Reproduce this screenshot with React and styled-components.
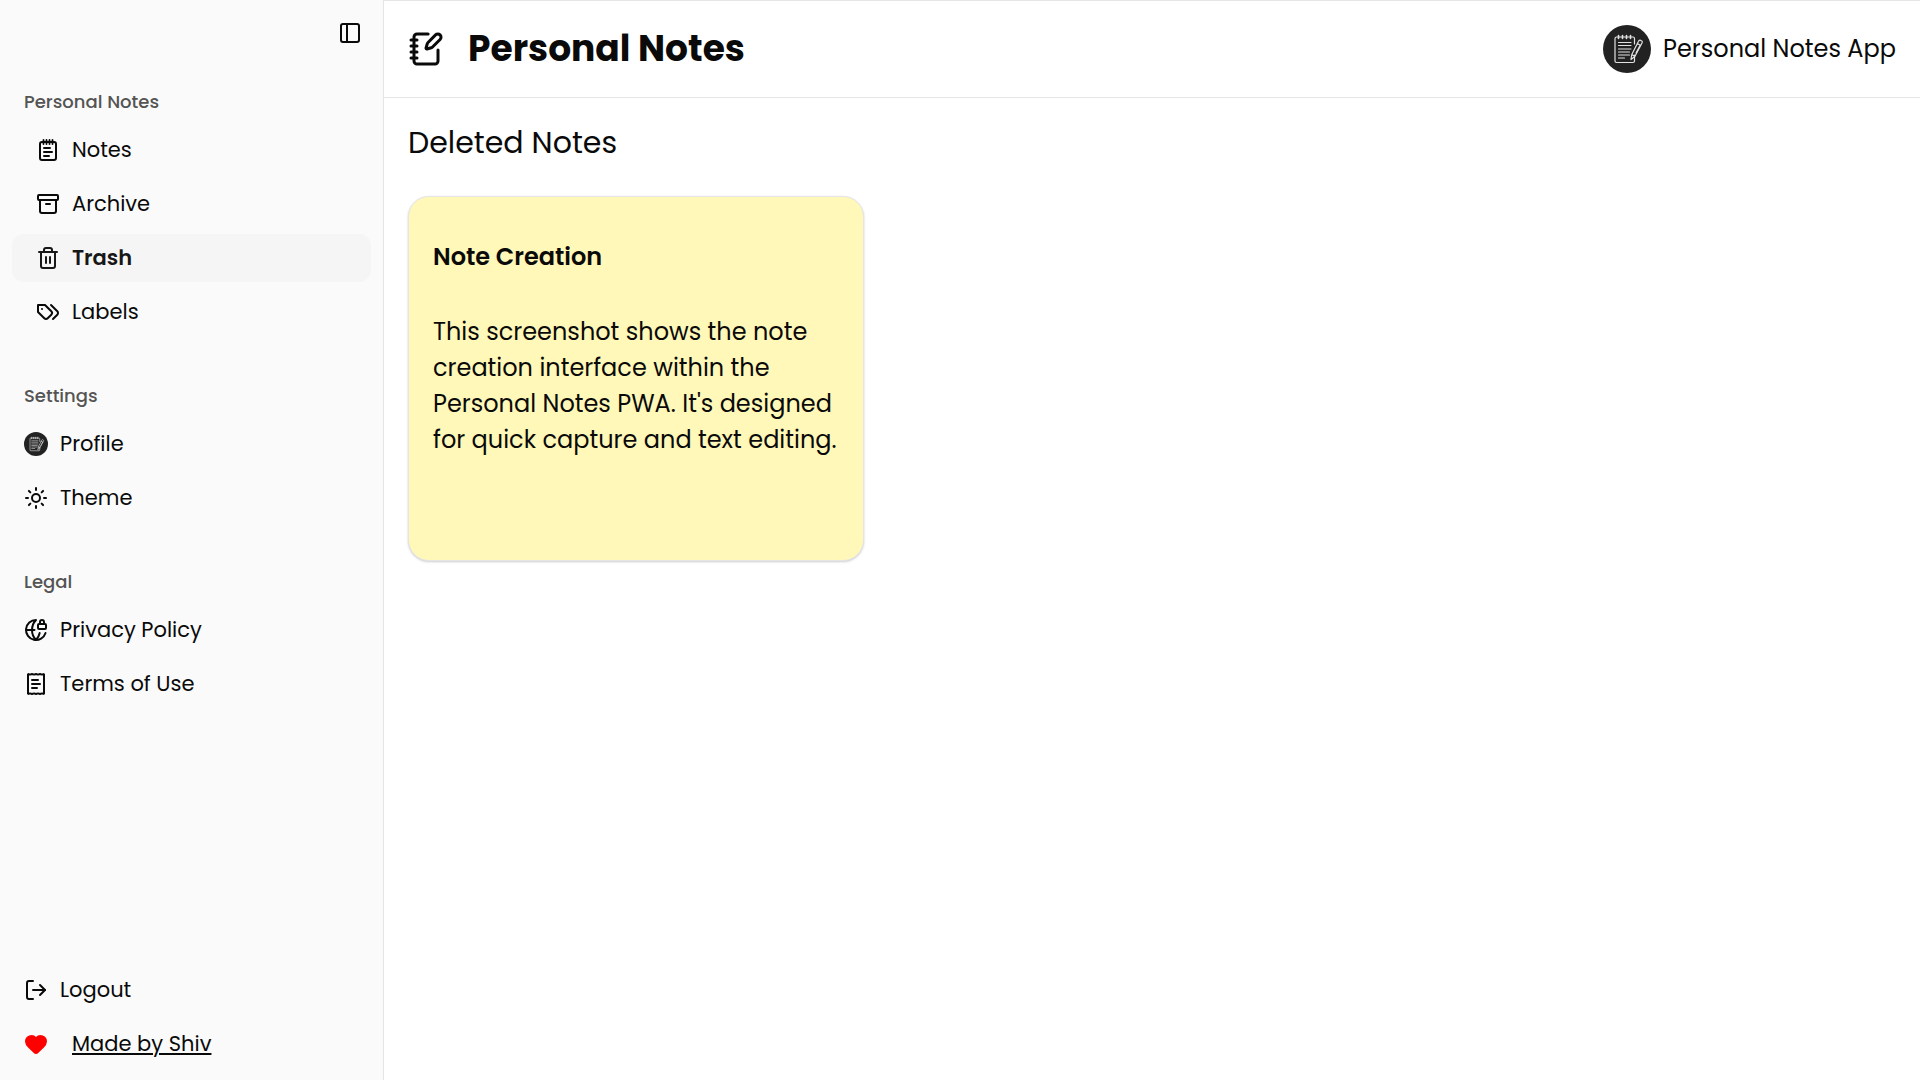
import React from "react";
import styled, { createGlobalStyle } from "styled-components";
import {
  Archive,
  GlobeLock,
  Heart,
  LogOut,
  NotebookPen,
  PanelLeft,
  Sun,
  Trash2,
} from "lucide-react";

const GlobalStyle = createGlobalStyle`
  *, *::before, *::after { box-sizing: border-box; }
  body {
    margin: 0;
    background: #ffffff;
    color: #0a0a0a;
    font-family: Poppins, Inter, "Open Sans", sans-serif;
    font-size: 24px;
    line-height: 36px;
  }
  h1, h2, h3, p, ul { margin: 0; padding: 0; }
  ul { list-style: none; }
  button { font: inherit; color: inherit; background: none; border: 0; padding: 0; cursor: pointer; }
  a { color: inherit; text-decoration: none; }
`;

const Shell = styled.div`
  display: flex;
  min-height: 100vh;
`;

const Sidebar = styled.aside`
  display: flex;
  flex-direction: column;
  flex: 0 0 384px;
  background: #fafafa;
  border-right: 1px solid #e5e5e5;
`;

const SidebarTop = styled.div`
  display: flex;
  justify-content: flex-end;
  padding: 12px;
`;

const ToggleButton = styled.button`
  display: grid;
  place-items: center;
  width: 42px;
  height: 42px;
  border-radius: 9px;
`;

const SidebarGroups = styled.nav`
  display: flex;
  flex: 1;
  flex-direction: column;
  gap: 12px;
`;

const Group = styled.section`
  padding: 12px;
`;

const GroupLabel = styled.h2`
  padding: 0 12px;
  color: #545454;
  font-size: 18px;
  font-weight: 500;
  line-height: 48px;
`;

const Menu = styled.ul`
  display: flex;
  flex-direction: column;
  gap: 6px;
`;

const MenuItem = styled.a`
  display: flex;
  align-items: center;
  gap: ${(p) => (p.$wide ? 24 : 12)}px;
  width: 100%;
  height: 48px;
  padding: 0 ${(p) => (p.$nested ? 24 : 12)}px;
  border-radius: 12px;
  background: ${(p) => (p.$active ? "#f5f5f5" : "transparent")};
  color: ${(p) => (p.$active ? "#171717" : "#0a0a0a")};
  font-size: 21px;
  font-weight: ${(p) => (p.$active ? 600 : 400)};
  text-align: left;

  svg { flex: none; }
`;

const Underlined = styled.span`
  text-decoration: underline;
`;

const SidebarFooter = styled.div`
  padding: 12px;
`;

const Main = styled.main`
  flex: 1;
  min-width: 0;
`;

const Header = styled.header`
  display: flex;
  align-items: center;
  justify-content: space-between;
  padding: 24px;
  border-top: 1px solid #e5e5e5;
  border-bottom: 1px solid #e5e5e5;
`;

const Brand = styled.div`
  display: flex;
  align-items: center;
  gap: 24px;
`;

const BrandTitle = styled.h1`
  font-size: 36px;
  font-weight: 700;
  line-height: 48px;
`;

const Account = styled.button`
  display: flex;
  align-items: center;
  gap: 12px;
`;

const Content = styled.div`
  display: flex;
  flex-direction: column;
  gap: 32px;
  padding: 24px;
`;

const PageTitle = styled.h2`
  font-size: 30px;
  font-weight: 400;
  line-height: 42px;
`;

const NoteGrid = styled.div`
  display: grid;
  grid-template-columns: repeat(auto-fill, 456px);
  gap: 24px;
`;

const NoteCard = styled.article`
  display: flex;
  flex-direction: column;
  gap: 39px;
  min-height: 365px;
  padding: 42px 24px;
  border: 1px solid #e5e5e5;
  border-radius: 21px;
  background: #fff8b8;
  box-shadow: 0 1px 3px rgba(0, 0, 0, 0.1), 0 1px 2px rgba(0, 0, 0, 0.1);
`;

const NoteTitle = styled.h3`
  font-size: 24px;
  font-weight: 600;
  line-height: 36px;
`;

const NoteText = styled.p`
  font-size: 24px;
  line-height: 36px;
`;

function Avatar({ size }) {
  return (
    <svg width={size} height={size} viewBox="0 0 48 48" fill="none" aria-hidden="true">
      <circle cx="24" cy="24" r="24" fill="#222222" />
      <g stroke="#e2e2e2" strokeLinecap="round" strokeLinejoin="round">
        <path d="M31.500 30v6a1.500 1.500 0 0 1-1.500 1.500H13.500a1.500 1.500 0 0 1-1.500-1.500V13.500a1.500 1.500 0 0 1 1.500-1.500H30a1.500 1.500 0 0 1 1.500 1.500V19" strokeWidth="1.200" />
        <path d="M15.500 10.500v3M19.500 10.500v3M23.500 10.500v3M27.500 10.500v3" strokeWidth="1.600" />
        <path d="M15.500 17.500h12.500M15.500 20.500h12.500M15.500 24h12.500M15.500 27h11M15.500 30h11M15.500 33h6" strokeWidth="1.100" />
        <path d="M28 34.500l.8-5 6.700-13.200c.4-1 1.300-1.300 2.200-.9l.7.4c.9.500 1.100 1.300.6 2.200l-7 13.200-4 3.300zM28.800 29.500l3.200 1.700M34.300 18.500l3.200 1.700M33 28l4-7.500" strokeWidth="1.200" />
      </g>
    </svg>
  );
}

function LineIcon({ children }) {
  return (
    <svg
      width="24"
      height="24"
      viewBox="0 0 24 24"
      fill="none"
      stroke="currentColor"
      strokeWidth="2"
      strokeLinecap="round"
      strokeLinejoin="round"
      aria-hidden="true"
    >
      {children}
    </svg>
  );
}

function NotesIcon() {
  return (
    <LineIcon>
      <rect x="4" y="4" width="16" height="18" rx="2" />
      <path d="M7.500 2v4M10.500 2v4M13.500 2v4M16.500 2v4" strokeWidth="1.800" />
      <path d="M8 10h6M8 14h8M8 18h5" />
    </LineIcon>
  );
}

function LabelsIcon() {
  return (
    <LineIcon>
      <path d="M9 5H2v7l6.290 6.290c.940.940 2.480.940 3.420 0l3.580-3.580c.940-.940.940-2.480 0-3.420L9 5Z" />
      <path d="M6 9.010V9" />
      <path d="m15 5 6.300 6.300a2.400 2.400 0 0 1 0 3.400L17 19" />
    </LineIcon>
  );
}

function TermsIcon() {
  return (
    <LineIcon>
      <path
        d="M4 2v20l2-.6 2 .6 2-.6 2 .6 2-.6 2 .6 2-.6 2 .6V2l-2 .6-2-.6-2 .6-2-.6-2 .6-2-.6-2 .6Z"
        strokeLinejoin="bevel"
      />
      <path d="M14 8H8M16 12H8M13 16H8" />
    </LineIcon>
  );
}

const noteLinks = [
  { label: "Notes", Icon: NotesIcon },
  { label: "Archive", Icon: Archive },
  { label: "Trash", Icon: Trash2, active: true },
  { label: "Labels", Icon: LabelsIcon },
];

export default function App() {
  return (
    <>
      <GlobalStyle />
      <Shell>
        <Sidebar>
          <SidebarTop>
            <ToggleButton type="button" aria-label="Toggle sidebar">
              <PanelLeft size={24} />
            </ToggleButton>
          </SidebarTop>
          <SidebarGroups>
            <Group>
              <GroupLabel>Personal Notes</GroupLabel>
              <Menu>
                {noteLinks.map(({ label, Icon, active }) => (
                  <li key={label}>
                    <MenuItem href="#" $nested $active={active} aria-current={active ? "page" : undefined}>
                      <Icon />
                      <span>{label}</span>
                    </MenuItem>
                  </li>
                ))}
              </Menu>
            </Group>
            <Group>
              <GroupLabel>Settings</GroupLabel>
              <Menu>
                <li>
                  <MenuItem as="button" type="button">
                    <Avatar size={24} />
                    <span>Profile</span>
                  </MenuItem>
                </li>
                <li>
                  <MenuItem as="button" type="button">
                    <Sun size={24} />
                    <span>Theme</span>
                  </MenuItem>
                </li>
              </Menu>
            </Group>
            <Group>
              <GroupLabel>Legal</GroupLabel>
              <Menu>
                <li>
                  <MenuItem href="#">
                    <GlobeLock size={24} />
                    <span>Privacy Policy</span>
                  </MenuItem>
                </li>
                <li>
                  <MenuItem href="#">
                    <TermsIcon />
                    <span>Terms of Use</span>
                  </MenuItem>
                </li>
              </Menu>
            </Group>
          </SidebarGroups>
          <SidebarFooter>
            <Menu>
              <li>
                <MenuItem as="button" type="button">
                  <LogOut size={24} />
                  <span>Logout</span>
                </MenuItem>
              </li>
              <li>
                <MenuItem href="#" $wide>
                  <Heart size={24} color="#ff0000" fill="#ff0000" />
                  <Underlined>Made by Shiv</Underlined>
                </MenuItem>
              </li>
            </Menu>
          </SidebarFooter>
        </Sidebar>
        <Main>
          <Header>
            <Brand>
              <NotebookPen size={36} />
              <BrandTitle>Personal Notes</BrandTitle>
            </Brand>
            <Account type="button">
              <Avatar size={48} />
              <span>Personal Notes App</span>
            </Account>
          </Header>
          <Content>
            <PageTitle>Deleted Notes</PageTitle>
            <NoteGrid>
              <NoteCard>
                <NoteTitle>Note Creation</NoteTitle>
                <NoteText>
                  This screenshot shows the note creation interface within the Personal Notes PWA. It's designed for
                  quick capture and text editing.
                </NoteText>
              </NoteCard>
            </NoteGrid>
          </Content>
        </Main>
      </Shell>
    </>
  );
}
